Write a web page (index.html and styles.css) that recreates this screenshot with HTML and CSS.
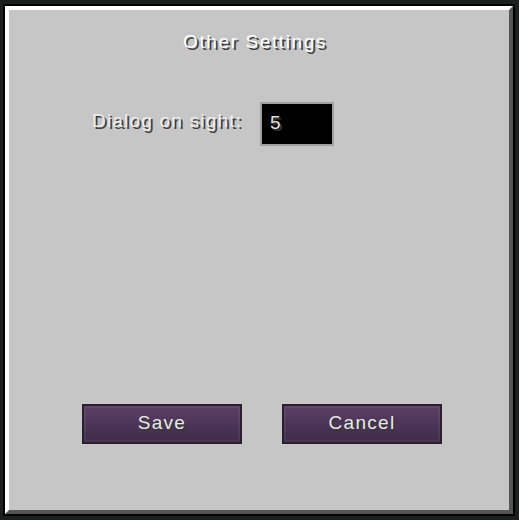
FILE: index.html
```html
<!DOCTYPE html>
<html>
<head>
<meta charset="utf-8">
<link rel="stylesheet" href="styles.css">
</head>
<body>
<div class="frame">
  <div class="panel">
    <div class="title">Other Settings</div>
    <div class="row">
      <div class="label">Dialog on sight:</div>
      <div class="field">5</div>
    </div>
    <div class="buttons">
      <div class="btn">Save</div>
      <div class="btn">Cancel</div>
    </div>
  </div>
</div>
</body>
</html>
```

FILE: styles.css
```css
html, body {
  margin: 0;
  padding: 0;
}
body {
  width: 519px;
  height: 520px;
  background: #1b1f1e;
  font-family: "Liberation Sans", Arial, sans-serif;
  font-size: 19px;
  line-height: 20px;
  overflow: hidden;
}
.frame {
  box-sizing: border-box;
  width: 512px;
  height: 512px;
  margin: 4px 0 0 3px;
  border: 2px solid #000;
}
.panel {
  box-sizing: border-box;
  height: 100%;
  background: #c6c6c6;
  border-style: solid;
  border-width: 4px;
  border-color: #ffffff #555555 #555555 #ffffff;
  display: flex;
  flex-direction: column;
  padding-bottom: 66px;
}
.title {
  margin-top: 22px;
  text-align: center;
  padding-right: 8px;
  color: #ffffff;
  letter-spacing: 1.6px;
  text-shadow: 2px 2px 0 #3f3f3f;
}
.row {
  margin-top: 50px;
  padding-left: 83px;
  display: flex;
  align-items: flex-start;
}
.label {
  margin-top: 9px;
  width: 168px;
  color: #ececec;
  letter-spacing: 1.2px;
  text-shadow: 2px 2px 0 #3f3f3f;
}
.field {
  box-sizing: border-box;
  width: 74px;
  height: 44px;
  border: 2px solid #a0a0a0;
  background: #000;
  color: #e0e0e0;
  padding: 9px 0 0 8px;
  text-shadow: 2px 2px 0 #383838;
}
.buttons {
  margin-top: auto;
  padding-left: 73px;
  display: flex;
  gap: 40px;
}
.btn {
  box-sizing: border-box;
  width: 160px;
  height: 40px;
  border: 2px solid #2a1f2f;
  background: linear-gradient(#5b3f66, #3e2b49);
  box-shadow: inset 0 0 0 2px rgba(255,255,255,0.05);
  display: flex;
  align-items: center;
  justify-content: center;
  padding-bottom: 2px;
  color: #e8e8e8;
  letter-spacing: 1.3px;
  text-shadow: 2px 2px 0 #383838;
}
```
